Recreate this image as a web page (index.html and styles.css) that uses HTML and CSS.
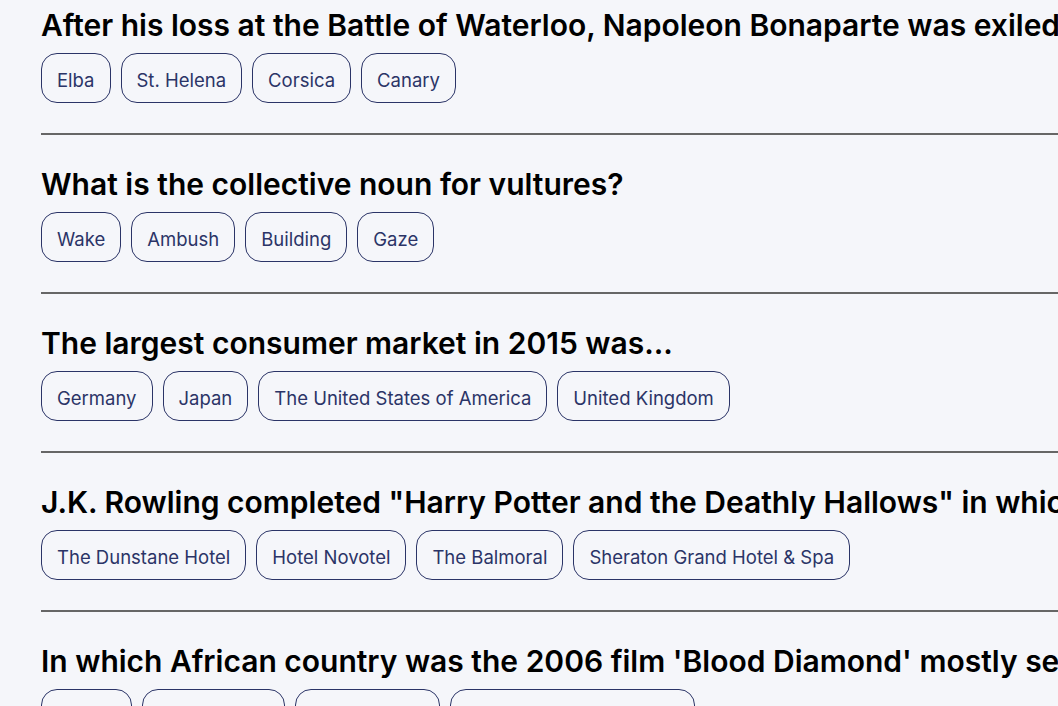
FILE: index.html
```html
<!DOCTYPE html>
<html>
<head>
<meta charset="utf-8">
<link rel="stylesheet" href="styles.css">
</head>
<body>
<div class="quiz">
  <div class="question">
    <h2 class="q-title">After his loss at the Battle of Waterloo, Napoleon Bonaparte was exiled to which island?</h2>
    <div class="choices">
      <button class="chip">Elba</button>
      <button class="chip">St. Helena</button>
      <button class="chip">Corsica</button>
      <button class="chip">Canary</button>
    </div>
  </div>
  <div class="question">
    <h2 class="q-title">What is the collective noun for vultures?</h2>
    <div class="choices">
      <button class="chip">Wake</button>
      <button class="chip">Ambush</button>
      <button class="chip">Building</button>
      <button class="chip">Gaze</button>
    </div>
  </div>
  <div class="question">
    <h2 class="q-title">The largest consumer market in 2015 was...</h2>
    <div class="choices">
      <button class="chip">Germany</button>
      <button class="chip">Japan</button>
      <button class="chip">The United States of America</button>
      <button class="chip">United Kingdom</button>
    </div>
  </div>
  <div class="question">
    <h2 class="q-title">J.K. Rowling completed "Harry Potter and the Deathly Hallows" in which hotel in Edinburgh, Scotland?</h2>
    <div class="choices">
      <button class="chip">The Dunstane Hotel</button>
      <button class="chip">Hotel Novotel</button>
      <button class="chip">The Balmoral</button>
      <button class="chip">Sheraton Grand Hotel &amp; Spa</button>
    </div>
  </div>
  <div class="question">
    <h2 class="q-title">In which African country was the 2006 film 'Blood Diamond' mostly set in?</h2>
    <div class="choices">
      <button class="chip">Liberia</button>
      <button class="chip">Sierra Leone</button>
      <button class="chip">Mozambique</button>
      <button class="chip">Central African Republic</button>
    </div>
  </div>
</div>
</body>
</html>
```
FILE: styles.css
```css
html, body {
  margin: 0;
  padding: 0;
  background: #f5f6fa;
  overflow: hidden;
}
body {
  font-family: Inter, "Noto Sans", sans-serif;
}
.quiz {
  padding: 0 0 0 41px;
}
.question {
  padding: 5px 0 30px;
  border-bottom: 2px solid #666;
  margin-bottom: 24px;
  white-space: nowrap;
}
.q-title {
  margin: 0;
  font-size: 30px;
  font-weight: 600;
  line-height: 40px;
  color: #000;
  white-space: nowrap;
}
.choices {
  display: flex;
  gap: 10px;
  margin-top: 8px;
}
.chip {
  height: 50px;
  padding: 3px 15px 0;
  border: 1px solid #2b3467;
  border-radius: 16px;
  background: transparent;
  color: #2b3467;
  font-family: Inter, "Noto Sans", sans-serif;
  font-size: 18.5px;
  font-weight: 400;
  white-space: nowrap;
}
```
